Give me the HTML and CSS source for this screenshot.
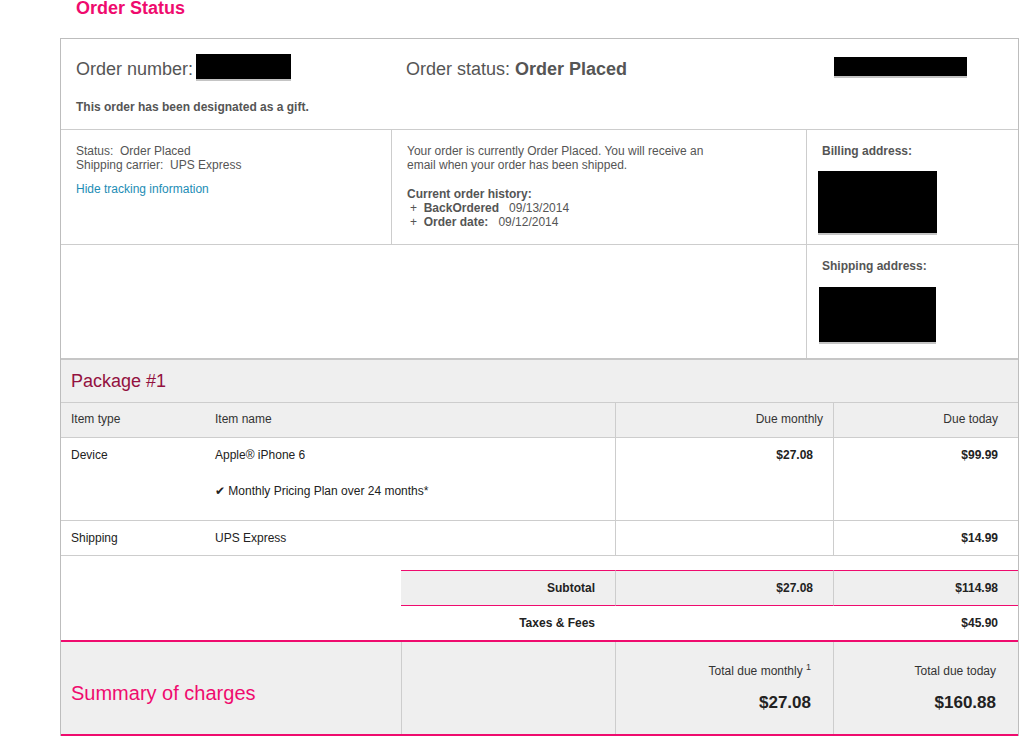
FILE: index.html
```html
<!DOCTYPE html>
<html lang="en">
<head>
<meta charset="utf-8">
<title>Order Status</title>
<link rel="stylesheet" href="styles.css">
</head>
<body>
<div class="page">
  <h1 class="page-title">Order Status</h1>
  <div class="order-box">
    <div class="order-head">
      <div class="head-row">
        <div class="order-number">Order number: <span class="redact redact-num"></span></div>
        <div class="order-status">Order status: <b>Order Placed</b></div>
        <div class="redact redact-status"></div>
      </div>
      <p class="gift">This order has been designated as a gift.</p>
    </div>

    <div class="info-grid">
      <div class="info-cell">
        <p class="lines">Status:&nbsp; Order Placed<br>Shipping carrier:&nbsp; UPS Express</p>
        <a class="track-link" href="#">Hide tracking information</a>
      </div>
      <div class="info-cell divided">
        <p class="lines message">Your order is currently Order Placed. You will receive an email when your order has been shipped.</p>
        <p class="lines history"><b>Current order history:</b><br>
          <span class="hist">+&nbsp; <b>BackOrdered</b>&nbsp;&nbsp; 09/13/2014</span><br>
          <span class="hist">+&nbsp; <b>Order date:</b>&nbsp;&nbsp; 09/12/2014</span></p>
      </div>
      <div class="info-cell divided addr">
        <p class="addr-label">Billing address:</p>
        <div class="redact redact-billing"></div>
      </div>
      <div class="info-cell wide"></div>
      <div class="info-cell divided addr">
        <p class="addr-label">Shipping address:</p>
        <div class="redact redact-shipping"></div>
      </div>
    </div>

    <div class="package-title">Package #1</div>
    <div class="items">
      <div class="item-row head">
        <div class="cell">Item type</div>
        <div class="cell">Item name</div>
        <div class="cell amount">Due monthly</div>
        <div class="cell amount">Due today</div>
      </div>
      <div class="item-row device">
        <div class="cell">Device</div>
        <div class="cell">Apple® iPhone 6<p class="plan">✔ Monthly Pricing Plan over 24 months*</p></div>
        <div class="cell amount"><b>$27.08</b></div>
        <div class="cell amount"><b>$99.99</b></div>
      </div>
      <div class="item-row ship last">
        <div class="cell">Shipping</div>
        <div class="cell">UPS Express</div>
        <div class="cell amount"></div>
        <div class="cell amount"><b>$14.99</b></div>
      </div>
    </div>

    <div class="totals">
      <div class="tot-row subtotal">
        <div class="blank"></div>
        <div class="tcell label">Subtotal</div>
        <div class="tcell val">$27.08</div>
        <div class="tcell val">$114.98</div>
      </div>
      <div class="tot-row taxes">
        <div class="blank"></div>
        <div class="tcell label">Taxes &amp; Fees</div>
        <div class="tcell"></div>
        <div class="tcell val">$45.90</div>
      </div>
    </div>

    <div class="summary">
      <div class="sum-title">Summary of charges</div>
      <div class="sum-cell"></div>
      <div class="sum-cell total">
        <div class="sum-label">Total due monthly <sup>1</sup></div>
        <div class="sum-amount">$27.08</div>
      </div>
      <div class="sum-cell total today">
        <div class="sum-label">Total due today</div>
        <div class="sum-amount">$160.88</div>
      </div>
    </div>
  </div>
</div>
</body>
</html>
```

FILE: styles.css
```css
* { box-sizing: border-box; }

html, body {
  margin: 0;
  padding: 0;
  background: #ffffff;
}

body {
  font-family: "Liberation Sans", Arial, Helvetica, sans-serif;
  font-size: 12px;
  line-height: 14px;
  color: #333333;
}

p { margin: 0; }

.page {
  width: 959px;
  margin-left: 60px;
}

.page-title {
  margin: -2px 0 0 16px;
  padding-bottom: 1px;
  font-size: 18px;
  line-height: 20px;
  font-weight: bold;
  color: #ef0b6e;
}

.order-box {
  margin-top: 19px;
  border: 1px solid #bdbdbd;
  border-bottom: 0;
}

/* header */
.order-head {
  border-bottom: 1px solid #cdcdcd;
  padding: 0 0 15px 15px;
  color: #555555;
}

.head-row {
  display: flex;
  align-items: flex-start;
}

.order-number {
  width: 330px;
  margin-top: 15px;
  font-size: 18px;
  line-height: 20px;
}

.order-status {
  width: 428px;
  margin-top: 20px;
  font-size: 18px;
  line-height: 20px;
}

.redact {
  background: #000000;
  box-shadow: 0 2px 0 #c4c4c4;
}

.redact-num {
  display: inline-block;
  width: 95px;
  height: 25px;
  vertical-align: -4px;
  margin-left: -2px;
}

.redact-status {
  width: 133px;
  height: 19px;
  margin-top: 18px;
}

.gift {
  margin-top: 21px;
  font-weight: bold;
}

/* info grid */
.info-grid {
  display: grid;
  grid-template-columns: 330px 415px 1fr;
  grid-template-rows: 115px 113px;
  color: #555555;
}

.info-cell {
  border-bottom: 1px solid #cdcdcd;
  padding: 14px 15px 0;
}

.info-grid .info-cell:nth-child(n+4) { border-bottom: 0; }

.info-cell.divided { border-left: 1px solid #cdcdcd; }

.info-cell.wide { grid-column: span 2; }

.track-link {
  display: inline-block;
  margin-top: 10px;
  color: #1d8db5;
  text-decoration: none;
}

.message { max-width: 305px; }

.history { margin-top: 15px; }

.hist { padding-left: 3px; }

.info-cell.addr { padding: 14px 15px 0; }

.addr-label { font-weight: bold; }

.redact-billing {
  width: 119px;
  height: 62px;
  margin: 13px 0 0 -4px;
}

.redact-shipping {
  width: 117px;
  height: 55px;
  margin: 14px 0 0 -3px;
}

/* package */
.package-title {
  background: #efefef;
  border-top: 2px solid #c6c6c6;
  height: 44px;
  line-height: 42px;
  padding-left: 10px;
  font-size: 18px;
  color: #931140;
}

.item-row {
  display: grid;
  grid-template-columns: 144px 410px 218px 1fr;
  border-top: 1px solid #cdcdcd;
  color: #222222;
}

.item-row.last { border-bottom: 1px solid #cdcdcd; }

.item-row.head { background: #efefef; color: #333333; }

.cell { padding: 10px 10px 10px; }

.item-row.head .cell { padding: 9px 10px 11px; }

.cell.amount {
  text-align: right;
  padding-right: 20px;
  border-left: 1px solid #cdcdcd;
}

.item-row .cell.amount:last-child { padding-right: 20px; }

.device .cell { padding-bottom: 22px; }

.plan { margin-top: 22px; }

/* totals */
.totals { margin-top: 14px; }

.tot-row {
  display: grid;
  grid-template-columns: 340px 214px 218px 1fr;
  color: #222222;
  font-weight: bold;
}

.tcell {
  text-align: right;
  padding: 10px 20px 10px 0;
}

.subtotal .tcell {
  background: #efefef;
  border-top: 1px solid #ef0b6e;
  border-bottom: 1px solid #ef0b6e;
}

.subtotal .tcell.val { border-left: 1px solid #cdcdcd; }

.taxes { border-bottom: 2px solid #ef0b6e; }

.taxes .tcell { padding: 10px 20px 10px 0; }

/* summary */
.summary {
  display: grid;
  grid-template-columns: 340px 214px 218px 1fr;
  height: 94px;
  background: #efefef;
  border-bottom: 2px solid #ef0b6e;
}

.sum-title {
  display: flex;
  align-items: center;
  padding: 9px 0 0 10px;
  font-size: 20px;
  line-height: 22px;
  color: #ef0b6e;
}

.sum-cell { border-left: 1px solid #cdcdcd; }

.sum-cell.total {
  text-align: right;
  padding: 22px 22px 0 0;
}

.sum-cell.today { padding-right: 22px; }

.sum-label { color: #333333; }

.sum-label sup {
  font-size: 9px;
  line-height: 0;
  vertical-align: 5px;
}

.sum-amount {
  margin-top: 15px;
  font-size: 17px;
  line-height: 20px;
  font-weight: bold;
  color: #222222;
}
```
